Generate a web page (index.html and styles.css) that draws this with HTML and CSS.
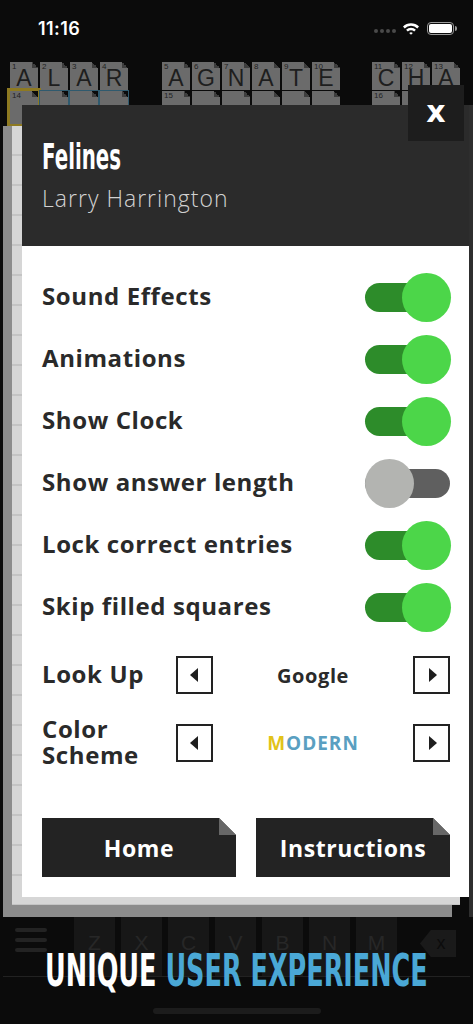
FILE: index.html
```html
<!DOCTYPE html>
<html lang="en">
<head>
<meta charset="utf-8">
<title>Settings</title>
<link rel="stylesheet" href="styles.css">
</head>
<body>
<div class="screen">
  <div class="status">
    <span class="time">11:16</span>
    <div class="status-icons">
      <span class="dots"><i></i><i></i><i></i><i></i></span>
      <svg class="wifi" width="18" height="13" viewBox="0 0 18 13">
        <path d="M1 4.6 A11.5 11.5 0 0 1 17 4.6 L15.3 6.4 A9 9 0 0 0 2.7 6.4 Z" fill="#fff"/>
        <path d="M4.1 7.8 A7 7 0 0 1 13.9 7.8 L12.2 9.6 A4.6 4.6 0 0 0 5.8 9.6 Z" fill="#fff"/>
        <path d="M7.2 11 A2.6 2.6 0 0 1 10.8 11 L9 12.8 Z" fill="#fff"/>
      </svg>
      <span class="battery"><span class="battery-fill"></span></span>
    </div>
  </div>

  <div class="clues">
    <div class="tile-row">
      <div class="group g1">
        <div class="tile"><span class="num">1</span>A</div>
        <div class="tile"><span class="num">2</span>L</div>
        <div class="tile"><span class="num">3</span>A</div>
        <div class="tile"><span class="num">4</span>R</div>
      </div>
      <div class="group g2">
        <div class="tile"><span class="num">5</span>A</div>
        <div class="tile"><span class="num">6</span>G</div>
        <div class="tile"><span class="num">7</span>N</div>
        <div class="tile"><span class="num">8</span>A</div>
        <div class="tile"><span class="num">9</span>T</div>
        <div class="tile"><span class="num">10</span>E</div>
      </div>
      <div class="group g3">
        <div class="tile"><span class="num">11</span>C</div>
        <div class="tile"><span class="num">12</span>H</div>
        <div class="tile"><span class="num">13</span>A</div>
      </div>
    </div>
    <div class="tile-row row2">
      <div class="group g1 sel">
        <div class="tile cur"><span class="num">14</span></div>
        <div class="tile word"></div>
        <div class="tile word"></div>
        <div class="tile word"></div>
      </div>
      <div class="group g2">
        <div class="tile"><span class="num">15</span></div>
        <div class="tile"></div>
        <div class="tile"></div>
        <div class="tile"></div>
        <div class="tile"></div>
        <div class="tile"></div>
      </div>
      <div class="group g3">
        <div class="tile"><span class="num">16</span></div>
        <div class="tile"></div>
      </div>
    </div>
  </div>

  <div class="board"></div>

  <div class="keyboard">
    <div class="menu-key"><i></i><i></i><i></i></div>
    <div class="keys">
      <span class="key">Z</span><span class="key">X</span><span class="key">C</span><span class="key">V</span><span class="key">B</span><span class="key">N</span><span class="key">M</span>
    </div>
    <div class="del-key"><span>x</span></div>
  </div>
  <div class="bottom"><span class="home-bar"></span></div>
</div>

<div class="stack stack-back"></div>
<div class="stack stack-mid"></div>
<div class="edge"></div>

<div class="modal">
  <div class="modal-head">
    <h1 class="title"><span>Felines</span></h1>
    <p class="author">Larry Harrington</p>
  </div>
  <div class="modal-body">
    <div class="opt"><span class="label">Sound Effects</span><span class="toggle on"><span class="knob"></span></span></div>
    <div class="opt"><span class="label">Animations</span><span class="toggle on"><span class="knob"></span></span></div>
    <div class="opt"><span class="label">Show Clock</span><span class="toggle on"><span class="knob"></span></span></div>
    <div class="opt"><span class="label">Show answer length</span><span class="toggle off"><span class="knob"></span></span></div>
    <div class="opt"><span class="label">Lock correct entries</span><span class="toggle on"><span class="knob"></span></span></div>
    <div class="opt"><span class="label">Skip filled squares</span><span class="toggle on"><span class="knob"></span></span></div>

    <div class="picker first">
      <span class="label plabel">Look Up</span>
      <span class="arrow left"></span>
      <span class="pvalue">Google</span>
      <span class="arrow right"></span>
    </div>
    <div class="picker">
      <span class="label plabel two">Color<br>Scheme</span>
      <span class="arrow left"></span>
      <span class="pvalue scheme"><span class="m">M</span>ODERN</span>
      <span class="arrow right"></span>
    </div>

    <div class="actions">
      <span class="btn">Home</span>
      <span class="btn">Instructions</span>
    </div>
  </div>
</div>

<div class="close">x</div>

<div class="tagline"><span class="tag-inner"><span class="t-white">UNIQUE</span> <span class="t-blue">USER EXPERIENCE</span></span></div>
</body>
</html>
```

FILE: styles.css
```css
* { box-sizing: border-box; margin: 0; padding: 0; }
html, body { width: 473px; height: 1024px; overflow: hidden; background: #0b0b0b; }
body { position: relative; font-family: "Open Sans", "Liberation Sans", sans-serif; }

.screen { height: 1024px; display: flex; flex-direction: column; }

/* status bar */
.status { height: 56px; display: flex; align-items: center; justify-content: space-between; padding: 0 19px 0 38px; }
.time { color: #fff; font-family: Inter, "Open Sans", sans-serif; font-weight: 600; font-size: 18px; letter-spacing: 0.4px; }
.status-icons { display: flex; align-items: center; gap: 6px; }
.dots { display: flex; gap: 2px; margin-top: 5px; }
.dots i { width: 4px; height: 4px; border-radius: 50%; background: #4a4a4a; display: block; }
.battery { width: 27px; height: 13px; border: 1.5px solid #9a9a9a; border-radius: 4px; padding: 1px; position: relative; margin-left: 1px; }
.battery::after { content: ""; position: absolute; right: -4px; top: 3px; width: 2px; height: 5px; background: #9a9a9a; border-radius: 0 2px 2px 0; }
.battery-fill { display: block; width: 100%; height: 100%; background: #fff; border-radius: 2px; }

/* clue tiles */
.clues { padding-top: 6px; }
.tile-row { display: flex; padding-left: 10px; }
.row2 { margin-top: 1px; }
.group { display: flex; gap: 2px; }
.g2 { margin-left: 34px; }
.g3 { margin-left: 32px; }
.tile { width: 28px; height: 28px; background: #6b6b6b; position: relative; color: #1e1e1e; font-family: "Liberation Sans", Arial, sans-serif; font-size: 23px; line-height: 33px; text-align: center; }
.tile::after { content: ""; position: absolute; top: 0; right: 0; width: 6px; height: 6px; background: linear-gradient(to top right, #3e3e3e 50%, #0b0b0b 50%); }
.num { position: absolute; left: 2px; top: 0; font-size: 8px; line-height: 10px; color: #222; }
.sel .tile.word { box-shadow: 0 0 0 1px #2f5a6e; }
.sel .tile.cur { box-shadow: 0 0 0 3px #8e7a22; height: 33px; }

.board { flex: 1; }

/* keyboard */
.keyboard { height: 73px; display: flex; align-items: stretch; border-bottom: 1px solid #222; margin: 0 3px; }
.menu-key { width: 71px; display: flex; flex-direction: column; justify-content: center; gap: 6px; padding-left: 12px; }
.menu-key i { display: block; width: 32px; height: 4px; border-radius: 2px; background: #232323; }
.keys { display: flex; gap: 6px; padding-top: 3px; }
.key { width: 41px; background: #171717; color: #272727; font-family: "Liberation Sans", Arial, sans-serif; font-size: 21px; text-align: center; padding-top: 24px; }
.del-key { margin-left: 23px; margin-top: 26px; width: 36px; height: 27px; background: #1a1a1a; clip-path: polygon(30% 0, 100% 0, 100% 100%, 30% 100%, 0 50%); color: #0c0c0c; font-family: "Liberation Sans", sans-serif; font-size: 18px; text-align: center; line-height: 26px; padding-left: 6px; }
.bottom { height: 47px; display: flex; justify-content: center; padding-top: 31px; }
.home-bar { width: 168px; height: 6px; border-radius: 3px; background: #1c1c1c; }

/* modal stack */
.stack { position: absolute; }
.stack-back { left: 3px; top: 126px; width: 449px; height: 791px; background: #8c8c8c; }
.stack-mid { left: 12px; top: 126px; width: 448px; height: 779px; background: #cbcbcb;
  background-image: repeating-linear-gradient(to bottom, #d6d6d6 0, #d6d6d6 28px, #c4c4c4 28px, #c4c4c4 30px); }
.edge { position: absolute; left: 469px; top: 105px; width: 4px; height: 812px; background: #2e2e2e; }

.modal { position: absolute; left: 22px; top: 105px; width: 447px; height: 792px; background: #fff; display: flex; flex-direction: column; }
.modal-head { height: 141px; background: #2b2b2b; padding: 34px 20px 0; }
.title { font-family: "DejaVu Sans", sans-serif; font-weight: 700; font-size: 36px; line-height: 36px; color: #fff; }
.title span { display: inline-block; transform: scaleX(0.55); transform-origin: left center; }
.author { margin-top: 10px; color: #d2d2d2; font-weight: 300; font-size: 23px; line-height: 26px; letter-spacing: 1px; }

.modal-body { flex: 1; padding: 20px 18px 0 20px; display: flex; flex-direction: column; }
.opt { height: 62px; display: flex; align-items: center; justify-content: space-between; }
.label { color: #2a2a2a; font-weight: 700; font-size: 24px; letter-spacing: 0.6px; line-height: 30px; margin-top: -2px; }

.toggle { width: 86px; height: 49px; position: relative; }
.toggle::before { content: ""; position: absolute; left: 0; right: 1px; top: 10px; height: 29px; border-radius: 15px; background: #2d8c2a; }
.knob { position: absolute; top: 0; right: 0; width: 49px; height: 49px; border-radius: 50%; background: #4cd649; }
.toggle.off::before { background: #5f5f5f; }
.toggle.off .knob { right: auto; left: 0; background: #b3b4b1; }

.picker { height: 62px; margin-top: 6px; display: flex; align-items: center; padding-right: 1px; }
.plabel { width: 134px; flex: none; }
.plabel.two { line-height: 26px; }
.arrow { width: 37px; height: 38px; border: 2px solid #222; position: relative; flex: none; }
.arrow::after { content: ""; position: absolute; top: 10px; border-top: 7px solid transparent; border-bottom: 7px solid transparent; }
.arrow.left::after { left: 12px; border-right: 8px solid #1e1e1e; }
.arrow.right::after { left: 14px; border-left: 8px solid #1e1e1e; }
.pvalue { flex: 1; text-align: center; color: #2a2a2a; font-weight: 700; font-size: 20px; letter-spacing: 0.6px; }
.scheme { color: #5a9fc1; font-size: 19px; letter-spacing: 1px; }
.scheme .m { color: #e2c31a; }

.actions { margin-top: 44px; display: flex; gap: 20px; padding-right: 1px; }
.btn { flex: 1; height: 59px; background: #232323; color: #fff; font-weight: 700; font-size: 23px; letter-spacing: 0.6px; display: flex; align-items: center; justify-content: center; position: relative;
  clip-path: polygon(0 0, calc(100% - 17px) 0, 100% 17px, 100% 100%, 0 100%); }
.btn::after { content: ""; position: absolute; top: 0; right: 0; width: 17px; height: 17px; background: #676767; }

.close { position: absolute; left: 408px; top: 85px; width: 56px; height: 56px; background: #1d1d1d; color: #fff; font-family: "DejaVu Sans", sans-serif; font-weight: 700; font-size: 30px; display: flex; align-items: center; justify-content: center; padding-bottom: 4px; }

.tagline { position: absolute; left: 0; right: 0; top: 948px; text-align: center; font-family: "DejaVu Sans", sans-serif; font-weight: 700; font-size: 45px; line-height: 45px; white-space: nowrap; }
.tag-inner { display: inline-block; transform: scaleX(0.567); transform-origin: center; margin-left: -300px; margin-right: -300px; }
.t-white { color: #fff; }
.t-blue { color: #4aa8d6; }
```
